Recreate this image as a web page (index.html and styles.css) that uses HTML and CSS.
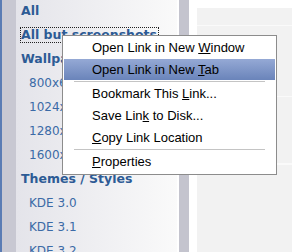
FILE: index.html
```html
<!DOCTYPE html>
<html lang="en">
<head>
  <meta charset="UTF-8" />
  <title>Gallery</title>
  <link rel="stylesheet" href="styles.css">
</head>
<body>
  <div class="page">
    <div class="edge"></div>

    <nav class="sidebar">
      <ul class="links">
        <li class="group"><a href="#">All</a></li>
        <li class="group"><a href="#" class="focused">All but screenshots</a></li>
        <li class="group"><a href="#">Wallpapers</a></li>
        <li class="sub"><a href="#">800x600</a></li>
        <li class="sub"><a href="#">1024x768</a></li>
        <li class="sub"><a href="#">1280x1024</a></li>
        <li class="sub"><a href="#">1600x1200</a></li>
        <li class="group"><a href="#">Themes / Styles</a></li>
        <li class="sub"><a href="#">KDE 3.0</a></li>
        <li class="sub"><a href="#">KDE 3.1</a></li>
        <li class="sub"><a href="#">KDE 3.2</a></li>
      </ul>
    </nav>

    <div class="divider"></div>

    <main class="content">
      <div class="row r1"></div>
      <div class="row r2"></div>
      <div class="row r3"></div>
      <div class="row r4"></div>
    </main>
  </div>

  <!-- context menu for the focused link -->
  <div class="menu">
    <div class="item">Open Link in New <u>W</u>indow</div>
    <div class="item active">Open Link in New <u>T</u>ab</div>
    <div class="sep"></div>
    <div class="item">Bookmark This <u>L</u>ink...</div>
    <div class="item">Save Lin<u>k</u> to Disk...</div>
    <div class="item"><u>C</u>opy Link Location</div>
    <div class="sep"></div>
    <div class="item"><u>P</u>roperties</div>
  </div>
</body>
</html>
```

FILE: styles.css
```css
body {
  margin: 0;
  background: #fff;
  overflow: hidden;
}
.page {
  display: flex;
  height: 252px;
}
.edge {
  width: 14px;
  flex: none;
  background: #c8c8d2;
  border-left: 2px solid #5a7cb4;
}
.sidebar {
  width: 161px;
  flex: none;
  background: linear-gradient(to right, #e4e4ea, #fafafa);
}
.links {
  list-style: none;
  margin: -1px 0 0;
  padding: 0;
  font-family: "DejaVu Sans", sans-serif;
}
.links li {
  height: 24px;
  line-height: 24px;
  white-space: nowrap;
}
.links a {
  text-decoration: none;
}
.group {
  padding-left: 5px;
  font-size: 12.5px;
  font-weight: bold;
}
.group a {
  color: #2d5b95;
}
.sub {
  padding-left: 13px;
  font-size: 12px;
}
.sub a {
  color: #3b6aa6;
}
.focused {
  display: inline-block;
  line-height: 14px;
  border: 1px dotted #222;
  padding: 0 1px 0 0;
  margin-left: -1px;
}
.divider {
  width: 10px;
  flex: none;
  background: #c4c4ce;
  margin-left: 2px;
}
.content {
  flex: 1;
  margin: 8px 0 0 8px;
  background: #f2f2f2;
}
.row {
  border-bottom: 1px solid #fafafa;
}
.r1 { height: 17px; }
.r2 { height: 70px; }
.r3 { height: 66px; }

.menu {
  position: absolute;
  left: 62px;
  top: 35px;
  width: 211px;
  padding: 1px;
  background: #fff;
  border: 1px solid #8c8c8c;
  font-family: "Liberation Sans", Arial, sans-serif;
  font-size: 13px;
  color: #000;
}
.item {
  height: 22px;
  line-height: 22px;
  padding-left: 28px;
  white-space: nowrap;
}
.item.active {
  height: 21px;
  margin-bottom: 1px;
  background: linear-gradient(#95a9d5, #6a84ba);
}
.sep {
  height: 2px;
  margin: 0 10px;
  box-sizing: border-box;
  border-top: 1px solid #c4c4c4;
}
```
